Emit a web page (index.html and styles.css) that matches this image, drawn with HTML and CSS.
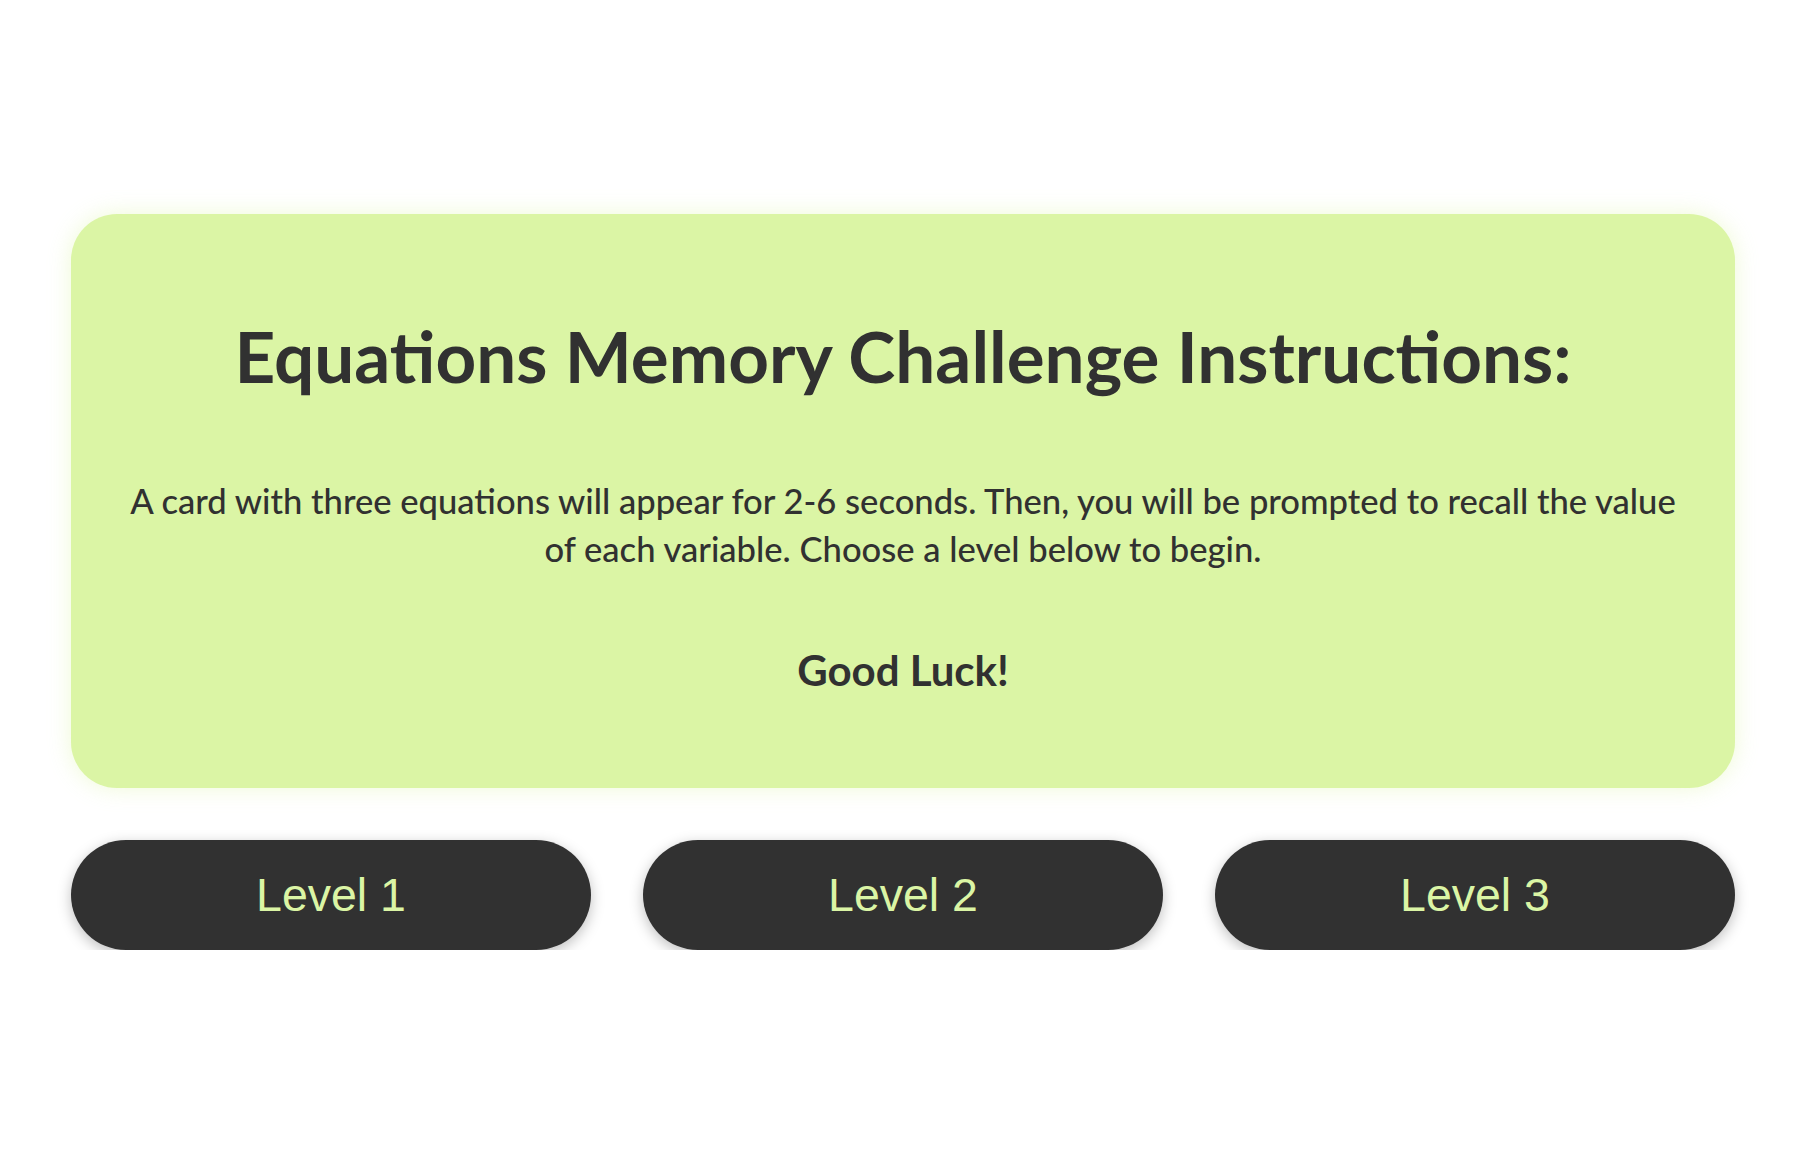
FILE: index.html
```html
<!DOCTYPE html>
<html lang="en">
<head>
<meta charset="utf-8">
<title>Equations Memory Challenge</title>
<link rel="stylesheet" href="styles.css">
</head>
<body>
<main class="page">
  <section class="card">
    <h1 class="title">Equations Memory Challenge Instructions:</h1>
    <p class="text">A card with three equations will appear for 2-6 seconds. Then, you will be prompted to recall the value of each variable. Choose a level below to begin.</p>
    <p class="luck">Good Luck!</p>
  </section>
  <div class="levels">
    <button class="level">Level 1</button>
    <button class="level">Level 2</button>
    <button class="level">Level 3</button>
  </div>
</main>
</body>
</html>
```
FILE: styles.css
```css
html, body {
  margin: 0;
  padding: 0;
  background: #ffffff;
}
.page {
  width: 1664px;
  margin: 0 0 0 71px;
  padding-top: 214px;
  font-family: "Lato", "Open Sans", sans-serif;
  color: #313131;
}
.card {
  background: #dbf5a5;
  border-radius: 46px;
  box-shadow: 0 0 22px rgba(219, 245, 165, 0.45);
  padding: 48px 52px 48px;
  text-align: center;
}
.title {
  font-size: 71px;
  line-height: 1.2;
  font-weight: 700;
  margin: 51px 0 0;
}
.text {
  font-size: 34.6px;
  line-height: 48px;
  font-weight: 500;
  margin: 79px 0 0;
}
.luck {
  font-size: 42px;
  line-height: 1.2;
  font-weight: 700;
  margin: 72px 0 44px;
}
.levels {
  display: grid;
  grid-template-columns: repeat(3, 1fr);
  gap: 52px;
  margin-top: 52px;
}
.level {
  height: 110px;
  border: none;
  border-radius: 55px;
  background: #313131;
  color: #dbf5a5;
  font-family: "Liberation Sans", Arial, sans-serif;
  font-size: 46.5px;
  padding-top: 2px;
  box-shadow: 0 4px 14px rgba(0, 0, 0, 0.25);
  cursor: pointer;
}
```
